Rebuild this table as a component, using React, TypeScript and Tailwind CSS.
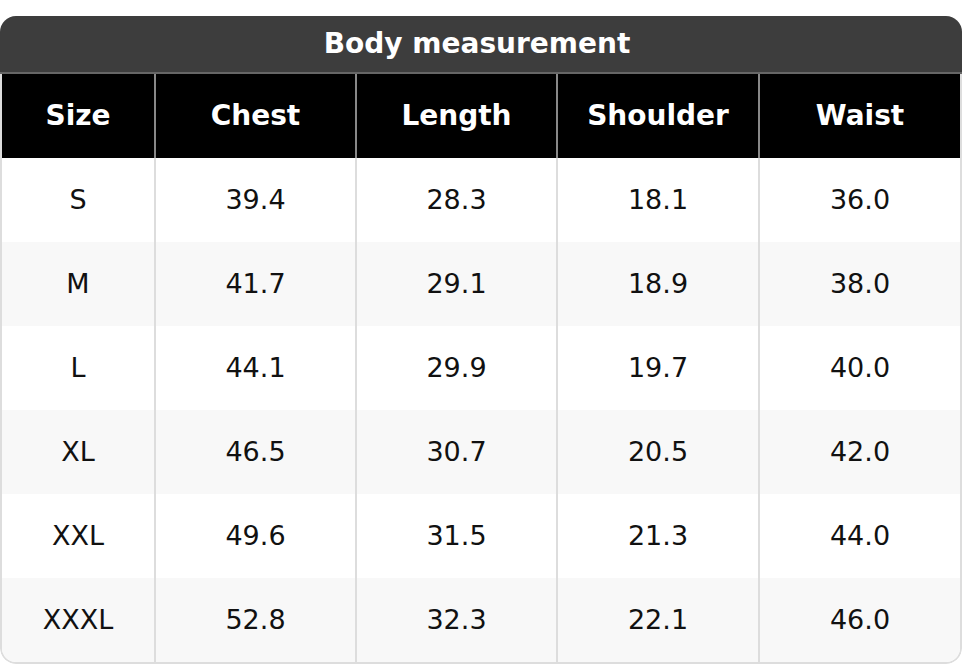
import React from "react";

const headers = ["Size", "Chest", "Length", "Shoulder", "Waist"];
const rows = [
  ["S", "39.4", "28.3", "18.1", "36.0"],
  ["M", "41.7", "29.1", "18.9", "38.0"],
  ["L", "44.1", "29.9", "19.7", "40.0"],
  ["XL", "46.5", "30.7", "20.5", "42.0"],
  ["XXL", "49.6", "31.5", "21.3", "44.0"],
  ["XXXL", "52.8", "32.3", "22.1", "46.0"],
];

export default function App() {
  return (
    <div
      className="w-[962px] h-[664px] bg-white pt-4"
      style={{ fontFamily: '"DejaVu Sans", "Liberation Sans", sans-serif' }}
    >
      <div className="rounded-2xl overflow-hidden">
        <div className="h-[56px] bg-[#3d3d3d] flex items-center justify-center pr-2 text-white font-bold text-[28px] border-b-2 border-[#666] box-content">
          Body measurement
        </div>
        <div className="border-x-2 border-b-2 border-[#dddddd] rounded-b-2xl overflow-hidden">
          <div className="grid grid-cols-[152px_201px_201px_202px_202px] h-[84px] bg-black">
            {headers.map((h, i) => (
              <div
                key={h}
                className={`flex items-center justify-center text-white font-bold text-[28px] ${
                  i > 0 ? "border-l-2 border-[#888]" : ""
                }`}
              >
                {h}
              </div>
            ))}
          </div>
          {rows.map((r, ri) => (
            <div
              key={ri}
              className={`grid grid-cols-[152px_201px_201px_202px_202px] h-[84px] ${
                ri % 2 === 1 ? "bg-[#f8f8f8]" : "bg-white"
              }`}
            >
              {r.map((c, i) => (
                <div
                  key={i}
                  className={`flex items-center justify-center text-[#111] text-[27px] ${
                    i > 0 ? "border-l-2 border-[#dddddd]" : ""
                  }`}
                >
                  {c}
                </div>
              ))}
            </div>
          ))}
        </div>
      </div>
    </div>
  );
}
